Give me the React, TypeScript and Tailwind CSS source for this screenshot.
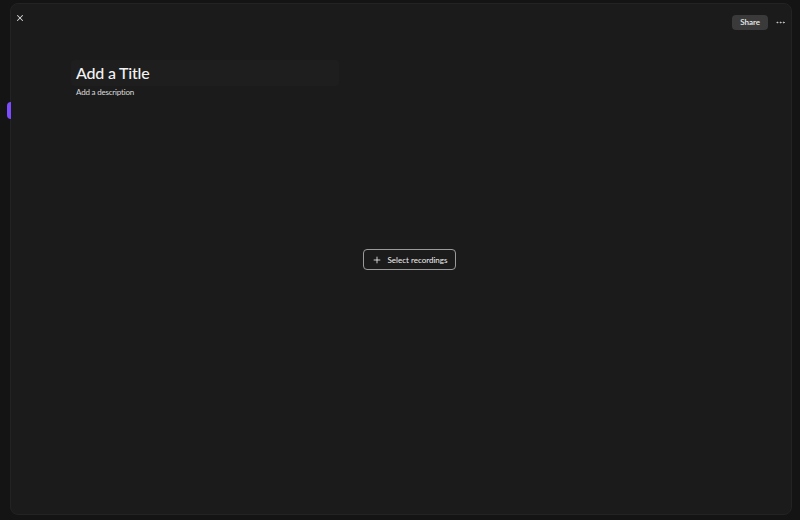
import { X, Plus, MoreHorizontal } from 'lucide-react';

export default function App() {
  return (
    <div className="flex h-[520px] w-[800px] bg-[#141414] pb-[5px] pl-[10px] pr-[8px] pt-[3px] font-['Lato',sans-serif] text-white">
      <div className="relative flex min-w-0 flex-1 flex-col rounded-lg border border-[#232323] bg-[#1b1b1b]">
        <span className="absolute left-[-4px] top-[98px] h-[17px] w-[4px] rounded-l-full bg-[#7c4dff]" />
        <div className="flex items-start justify-between pl-[1px] pr-[3px] pt-[6px]">
          <button className="flex h-[16px] w-[16px] items-center justify-center text-[#d8d8d8]">
            <X size={10} strokeWidth={2.5} />
          </button>
          <div className="mt-[4px] flex items-center gap-[4px]">
            <button className="h-[15px] rounded-[4px] bg-[#3a3a3a] px-[8px] text-[8px] font-semibold leading-[15px] text-[#eeeeee]">
              Share
            </button>
            <button className="flex h-[16px] w-[16px] items-center justify-center text-[#cfcfcf]">
              <MoreHorizontal size={11} />
            </button>
          </div>
        </div>

        <div className="ml-[60px] mt-[30px] flex w-[268px] flex-col">
          <div className="flex h-[26px] items-center rounded-[4px] bg-[#1e1e1e] px-[5px]">
            <h1 className="text-[16px] font-medium leading-none tracking-[-0.2px] text-[#f2f2f2]">Add a Title</h1>
          </div>
          <p className="ml-[5px] mt-0 text-[8px] tracking-[-0.2px] text-[#dcdcdc]">Add a description</p>
        </div>

        <div className="flex flex-1 items-start justify-center pl-[17px] pt-[151px]">
          <button className="flex h-[21px] w-[93px] items-center justify-center gap-[6px] rounded-[4px] border border-[#9a9a9a] text-[8px] text-[#f0f0f0]">
            <Plus size={10} strokeWidth={2} />
            Select recordings
          </button>
        </div>
      </div>
    </div>
  );
}
